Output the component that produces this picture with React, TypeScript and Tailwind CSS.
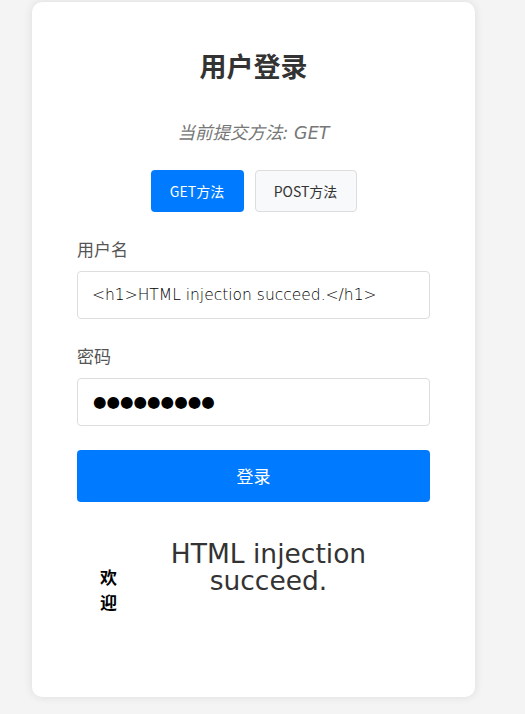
import { useState } from 'react'

export default function App() {
  const [method, setMethod] = useState<'GET' | 'POST'>('GET')
  const [username, setUsername] = useState('<h1>HTML injection succeed.</h1>')
  const [password, setPassword] = useState('●●●●●●●●●')

  return (
    <div className="min-h-screen bg-[#f4f4f4] pt-[2px] pl-[32px] font-['Noto_Sans_CJK_SC',sans-serif]">
      <div className="w-[443px] h-[695px] bg-white rounded-[10px] shadow-[0_0_10px_rgba(0,0,0,0.1)] px-[45px] pt-[46px]">
        <h2 className="text-center text-[27px] leading-[36px] font-bold text-[#333]">用户登录</h2>
        <p className="mt-[37px] text-center text-[17.5px] leading-[24px] italic text-[#777] font-['DejaVu_Sans','Noto_Sans_CJK_SC',sans-serif]">
          当前提交方法: {method}
        </p>

        <div className="mt-[25px] flex justify-center gap-[11px]">
          <button
            onClick={() => setMethod('GET')}
            className={`h-[42px] w-[93px] rounded-[4px] text-[14px] ${method === 'GET' ? 'bg-[#007bff] text-white' : 'bg-[#f8f9fa] border border-[#ddd] text-[#333]'}`}
          >
            GET方法
          </button>
          <button
            onClick={() => setMethod('POST')}
            className={`h-[42px] w-[102px] rounded-[4px] text-[14px] ${method === 'POST' ? 'bg-[#007bff] text-white' : 'bg-[#f8f9fa] border border-[#ddd] text-[#333]'}`}
          >
            POST方法
          </button>
        </div>

        <label className="block mt-[25px] text-[17px] leading-[24px] text-[#555]">用户名</label>
        <input
          value={username}
          onChange={(e) => setUsername(e.target.value)}
          className="mt-[10px] block w-full h-[48px] border border-[#ddd] rounded-[4px] pl-[14px] pr-[15px] text-[15.5px] text-black outline-none font-['DejaVu_Sans',sans-serif] font-extralight"
        />

        <label className="block mt-[25px] text-[17px] leading-[24px] text-[#555]">密码</label>
        <input
          value={password}
          onChange={(e) => setPassword(e.target.value)}
          className="mt-[10px] block w-full h-[48px] border border-[#ddd] rounded-[4px] px-[15px] text-[15.5px] text-black outline-none font-['DejaVu_Sans',sans-serif]"
        />

        <button className="mt-[24px] block w-full h-[52px] rounded-[4px] bg-[#007bff] text-white text-[17px]">登录</button>

        <div className="mt-[38px] flex items-start">
          <p className="mt-[24px] ml-[23px] w-[18px] text-[17px] leading-[25px] font-bold text-black">欢迎</p>
          <h1 className="ml-[23px] mr-[34px] flex-1 text-center text-[26.5px] leading-[27px] text-[#333] font-['DejaVu_Sans',sans-serif]">
            HTML injection succeed.
          </h1>
        </div>
      </div>
    </div>
  )
}
